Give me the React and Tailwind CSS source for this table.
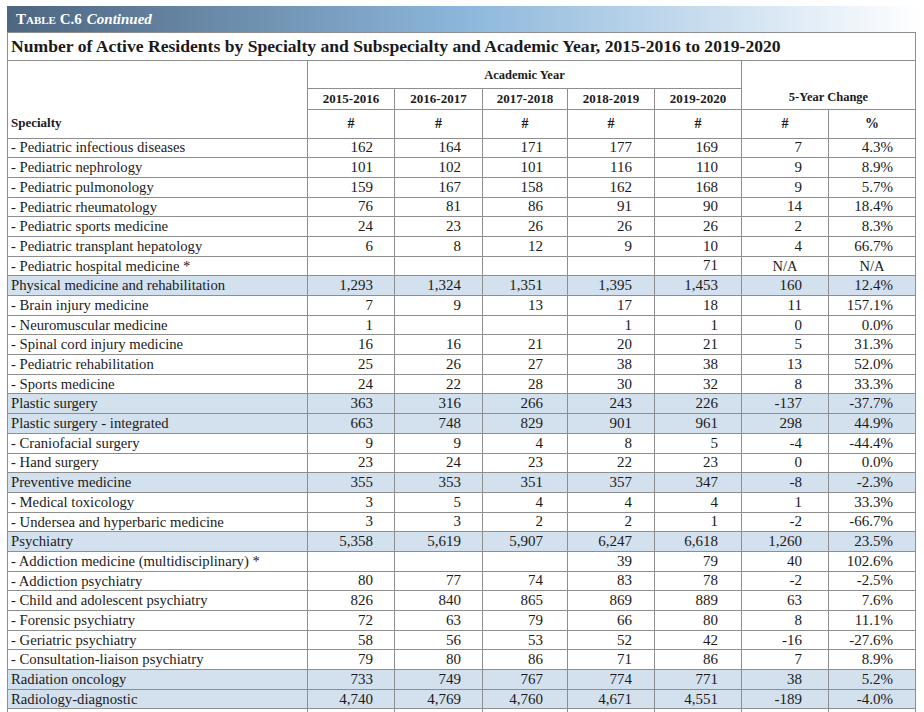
const rows = [
  ["- Pediatric infectious diseases", "162", "164", "171", "177", "169", "7", "4.3%"],
  ["- Pediatric nephrology", "101", "102", "101", "116", "110", "9", "8.9%"],
  ["- Pediatric pulmonology", "159", "167", "158", "162", "168", "9", "5.7%"],
  ["- Pediatric rheumatology", "76", "81", "86", "91", "90", "14", "18.4%"],
  ["- Pediatric sports medicine", "24", "23", "26", "26", "26", "2", "8.3%"],
  ["- Pediatric transplant hepatology", "6", "8", "12", "9", "10", "4", "66.7%"],
  ["- Pediatric hospital medicine *", "", "", "", "", "71", "N/A", "N/A"],
  ["Physical medicine and rehabilitation", "1,293", "1,324", "1,351", "1,395", "1,453", "160", "12.4%", true],
  ["- Brain injury medicine", "7", "9", "13", "17", "18", "11", "157.1%"],
  ["- Neuromuscular medicine", "1", "", "", "1", "1", "0", "0.0%"],
  ["- Spinal cord injury medicine", "16", "16", "21", "20", "21", "5", "31.3%"],
  ["- Pediatric rehabilitation", "25", "26", "27", "38", "38", "13", "52.0%"],
  ["- Sports medicine", "24", "22", "28", "30", "32", "8", "33.3%"],
  ["Plastic surgery", "363", "316", "266", "243", "226", "-137", "-37.7%", true],
  ["Plastic surgery - integrated", "663", "748", "829", "901", "961", "298", "44.9%", true],
  ["- Craniofacial surgery", "9", "9", "4", "8", "5", "-4", "-44.4%"],
  ["- Hand surgery", "23", "24", "23", "22", "23", "0", "0.0%"],
  ["Preventive medicine", "355", "353", "351", "357", "347", "-8", "-2.3%", true],
  ["- Medical toxicology", "3", "5", "4", "4", "4", "1", "33.3%"],
  ["- Undersea and hyperbaric medicine", "3", "3", "2", "2", "1", "-2", "-66.7%"],
  ["Psychiatry", "5,358", "5,619", "5,907", "6,247", "6,618", "1,260", "23.5%", true],
  ["- Addiction medicine (multidisciplinary) *", "", "", "", "39", "79", "40", "102.6%"],
  ["- Addiction psychiatry", "80", "77", "74", "83", "78", "-2", "-2.5%"],
  ["- Child and adolescent psychiatry", "826", "840", "865", "869", "889", "63", "7.6%"],
  ["- Forensic psychiatry", "72", "63", "79", "66", "80", "8", "11.1%"],
  ["- Geriatric psychiatry", "58", "56", "53", "52", "42", "-16", "-27.6%"],
  ["- Consultation-liaison psychiatry", "79", "80", "86", "71", "86", "7", "8.9%"],
  ["Radiation oncology", "733", "749", "767", "774", "771", "38", "5.2%", true],
  ["Radiology-diagnostic", "4,740", "4,769", "4,760", "4,671", "4,551", "-189", "-4.0%", true],
  ["", "", "", "", "", "", "", ""],
];

// right padding per number column, so the figures line up like the print
const pads = ["pr-[21px]", "pr-[21px]", "pr-[24px]", "pr-[22px]", "pr-[23px]", "pr-[26px]", "pr-[22px]"];
const widths = ["w-[300px]", "w-[87px]", "w-[88px]", "w-[85px]", "w-[87px]", "w-[87px]", "w-[87px]", "w-[87px]"];
const years = ["2015-2016", "2016-2017", "2017-2018", "2018-2019", "2019-2020"];

const cell = "border border-[#8e8e8e] p-0";

export default function App() {
  return (
    <div className="min-h-screen bg-white pt-[6px] pl-[7px] font-['Liberation_Serif',serif] text-[#1c1a1b]">
      <div className="flex h-[26px] w-[913px] items-center bg-linear-to-r from-[#4e6680] via-[#8cb7db] to-white pl-[9px] text-[15px] font-bold text-white">
        <span className="[font-variant-caps:small-caps]">Table C.6</span>
        <span className="ml-[5px] italic">Continued</span>
      </div>

      <table className="table-fixed border-collapse">
        <colgroup>
          {widths.map((w, i) => (
            <col key={i} className={w} />
          ))}
        </colgroup>
        <thead>
          <tr className="h-[28px]">
            <th colSpan={8} className={`${cell} pl-[3px] text-left text-[17.6px] font-bold`}>
              Number of Active Residents by Specialty and Subspecialty and Academic Year, 2015-2016 to 2019-2020
            </th>
          </tr>
          <tr className="h-[28px] text-[12.5px] font-bold">
            <th rowSpan={3} className={`${cell} pb-[5px] pl-[3px] text-left align-bottom text-[13px]`}>
              Specialty
            </th>
            <th colSpan={5} className={`${cell} pt-[2px]`}>
              Academic Year
            </th>
            <th colSpan={2} rowSpan={2} className={`${cell} align-bottom pb-[2px]`}>
              5-Year Change
            </th>
          </tr>
          <tr className="h-[19px] text-[13px] font-bold">
            {years.map((y) => (
              <th key={y} className={cell}>
                {y}
              </th>
            ))}
          </tr>
          <tr className="h-[29px] text-[14px] font-bold">
            {["#", "#", "#", "#", "#", "#", "%"].map((h, i) => (
              <th key={i} className={cell}>
                {h}
              </th>
            ))}
          </tr>
        </thead>
        <tbody>
          {rows.map((r, i) => (
            <tr key={i} className={`h-[19.7px] leading-none ${r[8] ? "bg-[#d3e1ee]" : ""}`}>
              <td className={`${cell} pl-[3px] text-[14.7px] whitespace-nowrap`}>{r[0]}</td>
              {r.slice(1, 8).map((v, j) =>
                v === "N/A" ? (
                  <td key={j} className={`${cell} text-center text-[14.5px]`}>
                    {v}
                  </td>
                ) : (
                  <td key={j} className={`${cell} ${pads[j]} text-right text-[15px]`}>
                    {v}
                  </td>
                )
              )}
            </tr>
          ))}
        </tbody>
      </table>
    </div>
  );
}
